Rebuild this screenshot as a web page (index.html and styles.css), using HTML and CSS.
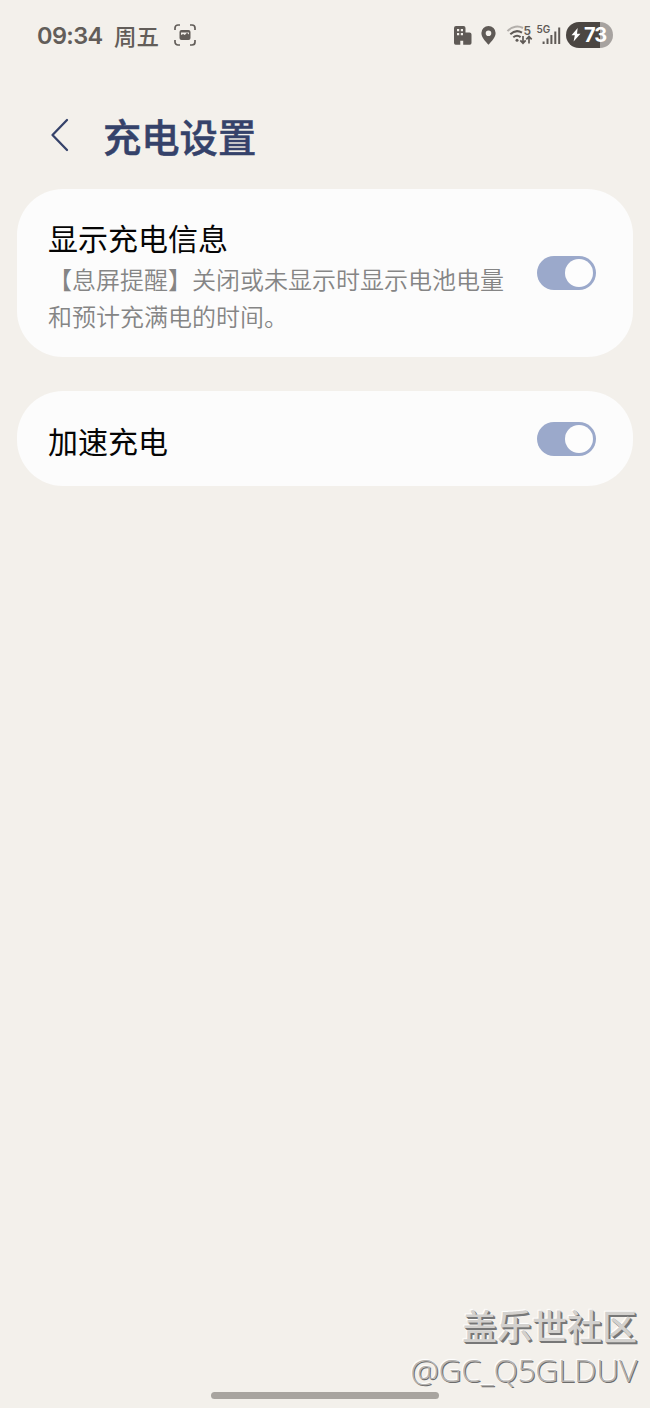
FILE: index.html
```
<!DOCTYPE html>
<html lang="zh-CN">
<head>
    <meta charset="UTF-8">
    <meta name="viewport" content="width=device-width, initial-scale=1.0">
    <title>充电设置</title>
    <link rel="stylesheet" href="styles.css">
</head>
<body>
    <div class="screen">
        <div class="status-bar">
            <span class="time">09:34</span>
            <span class="day">周五</span>
            <svg class="capture-icon" width="22" height="22" viewBox="0 0 22 22">
                <path d="M1 6V4a3 3 0 0 1 3-3h2M16 1h2a3 3 0 0 1 3 3v2M21 16v2a3 3 0 0 1-3 3h-2M6 21H4a3 3 0 0 1-3-3v-2" fill="none" stroke="#625d59" stroke-width="1.7"/>
                <rect x="5.5" y="6" width="11" height="10" rx="2" fill="#625d59"/>
                <path d="M7 11V8.500h8v2l-2-1.700-2.200 2.300-1.700-1.200z" fill="#f3f0eb"/>
            </svg>
            <div class="status-icons">
                <svg width="18" height="19" viewBox="0 0 18 19">
                    <path d="M2 0h7.500a2 2 0 0 1 2 2v4.500h4a2 2 0 0 1 2 2V17a1.700 1.700 0 0 1-1.700 1.700H9.200v-4H6.300v4H1.700A1.700 1.700 0 0 1 0 17V2a2 2 0 0 1 2-2z" fill="#5f5a56"/>
                    <path d="M3 3h2.200v2.200H3zM6.800 3H9v2.200H6.800zM3 7h2.200v2.200H3zM6.800 7H9v2.200H6.800z" fill="#f3f0eb"/>
                </svg>
                <svg class="pin" width="15" height="19" viewBox="0 0 15 19">
                    <path fill-rule="evenodd" d="M7.500 0A7.100 7.100 0 0 0 .4 7.100c0 4.400 4 8.400 7.100 11.700 3.100-3.300 7.100-7.300 7.100-11.700A7.100 7.100 0 0 0 7.500 0zm0 4.400a2.800 2.800 0 1 1 0 5.600 2.800 2.800 0 0 1 0-5.600z" fill="#5f5a56"/>
                </svg>
                <svg class="wifi" width="28" height="22" viewBox="0 0 28 22">
                    <path d="M1.500 7.200C6 2 12.500 1.600 17 4" fill="none" stroke="#b3afab" stroke-width="2"/>
                    <path d="M4.300 10.300C8 6.700 12.500 6.500 16 8.700M7.300 13.300c2.400-2 5-2 7.300-.2" fill="none" stroke="#5f5a56" stroke-width="2"/>
                    <circle cx="11" cy="16.200" r="1.500" fill="#5f5a56"/>
                    <path d="M17 12v7M14.300 16.300l2.700 2.900 2.700-2.900M23 19.500v-7M20.300 15.300l2.700-2.900 2.700 2.900" fill="none" stroke="#5f5a56" stroke-width="1.700"/>
                    <text class="wifi-label" x="17.500" y="10.500">5</text>
                </svg>
                <svg class="signal" width="25" height="24" viewBox="0 0 25 24">
                    <text class="net-label" x="-0.500" y="9.500">5G</text>
                    <path d="M6.600 18.500V21M10.500 15.500V21M14.400 12V21M18.300 8.500V21M22.200 4.500V21" fill="none" stroke="#5f5a56" stroke-width="2"/>
                </svg>
                <div class="battery">
                    <svg width="10" height="14" viewBox="0 0 10 14">
                        <path d="M6.700 0L.5 7.300h3.300L2.600 13.500 9.500 5.700H6z" fill="#fff"/>
                    </svg>
                    <span>73</span>
                </div>
            </div>
        </div>

        <div class="header">
            <svg width="20" height="34" viewBox="0 0 20 34">
                <path d="M17 2L2.500 17 17 32" fill="none" stroke="#35426a" stroke-width="2.300" stroke-linecap="round" stroke-linejoin="round"/>
            </svg>
            <h1>充电设置</h1>
        </div>

        <div class="card card-info">
            <div class="card-text">
                <h2>显示充电信息</h2>
                <p>【息屏提醒】关闭或未显示时显示电池电量和预计充满电的时间。</p>
            </div>
            <div class="toggle"></div>
        </div>

        <div class="card card-fast">
            <div class="card-text">
                <h2>加速充电</h2>
            </div>
            <div class="toggle"></div>
        </div>

        <div class="footer">
            <p class="community">盖乐世社区</p>
            <p class="user">@GC_Q5GLDUV</p>
            <div class="home-bar"></div>
        </div>
    </div>
</body>
</html>
```
FILE: styles.css
```
* {
    box-sizing: border-box;
}
body {
    margin: 0;
    background-color: #f3f0eb;
    font-family: "Noto Sans CJK SC", sans-serif;
}
h1, h2, p {
    margin: 0;
}
svg {
    display: block;
    flex: none;
    overflow: visible;
}
.screen {
    display: flex;
    flex-direction: column;
    height: 1408px;
    overflow: hidden;
}

/* Status bar */
.status-bar {
    display: flex;
    align-items: center;
    height: 70px;
    padding: 0 37px;
    color: #625d59;
}
.time {
    width: 77px;
    font-family: Inter, sans-serif;
    font-size: 23.5px;
    font-weight: 600;
    letter-spacing: -0.6px;
}
.day {
    width: 60px;
    font-size: 22.5px;
    font-weight: 500;
    line-height: 32px;
    padding-bottom: 1px;
}
.status-icons {
    display: flex;
    align-items: center;
    margin-left: auto;
}
.pin {
    margin-left: 9px;
}
.wifi {
    margin-left: 10px;
}
.signal {
    margin-left: 3px;
}
.wifi-label {
    font: 600 12px/12px Inter, sans-serif;
    fill: #5f5a56;
}
.net-label {
    font: 600 10px/10px Inter, sans-serif;
    fill: #5f5a56;
}
.battery {
    display: flex;
    align-items: center;
    gap: 3px;
    width: 47px;
    height: 26px;
    margin-left: 4px;
    padding-left: 5px;
    border-radius: 13px;
    background: linear-gradient(to right, #4b4642 73%, #a7a3a0 73%);
    color: #fff;
    font: 700 20px Inter, sans-serif;
    letter-spacing: -1px;
}

/* Title */
.header {
    display: flex;
    align-items: center;
    gap: 33px;
    height: 119px;
    padding: 11px 50px 0;
    color: #35426a;
}
.header h1 {
    padding-top: 2px;
    font-size: 38.3px;
    font-weight: 500;
    line-height: 56px;
    -webkit-text-stroke: 0.5px #35426a;
}

/* Cards */
.card {
    display: flex;
    align-items: center;
    justify-content: space-between;
    margin: 0 17px;
    padding: 0 37px 0 31px;
    border-radius: 46px;
    background: #fcfcfc;
}
.card-info {
    height: 168px;
}
.card-fast {
    height: 95px;
    margin-top: 34px;
}
.card-text {
    width: 458px;
    padding-top: 2px;
}
.card h2 {
    color: #050505;
    font-size: 30px;
    font-weight: 400;
    line-height: 44px;
}
.card p {
    padding-top: 1px;
    color: #858585;
    font-size: 24px;
    font-weight: 350;
    line-height: 37px;
}
.toggle {
    width: 59px;
    height: 34px;
    padding: 3px;
    border-radius: 17px;
    background: #9ba9cb;
}
.toggle::after {
    content: "";
    display: block;
    width: 28px;
    height: 28px;
    margin-left: auto;
    border-radius: 50%;
    background: #fdfdfd;
}

/* Watermark and home bar */
.footer {
    display: flex;
    flex-direction: column;
    align-items: flex-end;
    margin-top: auto;
    padding-right: 13px;
    color: #d3d1ce;
}
.community {
    font-size: 35px;
    font-weight: 500;
    line-height: 48px;
    text-shadow: 1px 1px 0 #777, 2px 2px 0 #777, -1px -1px 1px #fff;
}
.user {
    color: #b5b2af;
    font-family: "Open Sans", sans-serif;
    font-size: 32px;
    font-weight: 300;
    line-height: 42px;
    letter-spacing: -0.4px;
    text-shadow: 1px 1px 0 #6c6c6c, -1px -1px 1px #fff;
}
.home-bar {
    width: 228px;
    height: 7px;
    margin: 1px 198px 9px 0;
    border-radius: 4px;
    background: #a8a49f;
}
```
